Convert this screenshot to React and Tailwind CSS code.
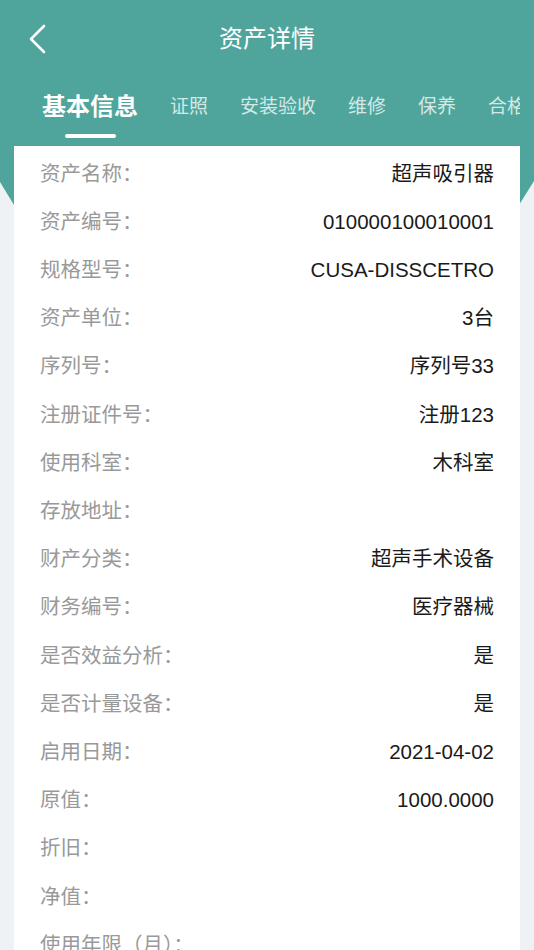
import React from 'react';

const tabs = ['基本信息', '证照', '安装验收', '维修', '保养', '合格证'];

const rows = [
    ['资产名称：', '超声吸引器'],
    ['资产编号：', '010000100010001'],
    ['规格型号：', 'CUSA-DISSCETRO'],
    ['资产单位：', '3台'],
    ['序列号：', '序列号33'],
    ['注册证件号：', '注册123'],
    ['使用科室：', '木科室'],
    ['存放地址：', ''],
    ['财产分类：', '超声手术设备'],
    ['财务编号：', '医疗器械'],
    ['是否效益分析：', '是'],
    ['是否计量设备：', '是'],
    ['启用日期：', '2021-04-02'],
    ['原值：', '1000.0000'],
    ['折旧：', ''],
    ['净值：', ''],
    ['使用年限（月）：', ''],
    ['使用状态：', ''],
];

const App = () => {
    return (
        <div
            className="h-[950px] overflow-hidden bg-[#eef2f5]"
            style={{ fontFamily: '"Liberation Sans", "Noto Sans CJK SC", sans-serif' }}
        >
            {/* Header */}
            <div className="h-[205px] bg-[#4fa59c] [clip-path:polygon(0_0,100%_0,100%_181px,calc(100%-15px)_205px,14px_205px,0_182px)]">
                <div className="relative flex h-[78px] items-center justify-center">
                    <button className="absolute left-[26px] top-[23px] text-white">
                        <svg width="24" height="32" viewBox="0 0 24 32" fill="none" stroke="currentColor">
                            <polyline points="18,3 5,16 18,29" strokeWidth="2.6" strokeLinecap="round" strokeLinejoin="round" />
                        </svg>
                    </button>
                    <h1 className="text-[24px] text-white">资产详情</h1>
                </div>

                {/* Tabs */}
                <div className="mr-[14px] overflow-hidden">
                    <div className="flex items-start gap-[32px] whitespace-nowrap pl-[42px] pt-[15px]">
                        {tabs.map((tab, i) => (
                            <div key={tab} className="flex shrink-0 flex-col items-center">
                                <span
                                    className={
                                        i === 0
                                            ? 'text-[24px] font-bold leading-[28px] text-white'
                                            : 'text-[19px] leading-[28px] text-[#d3e9e6]'
                                    }
                                >
                                    {tab}
                                </span>
                                {i === 0 && <div className="mt-[13px] h-[4px] w-[51px] rounded-full bg-white" />}
                            </div>
                        ))}
                    </div>
                </div>
            </div>

            {/* Detail card */}
            <div className="relative mx-[14px] -mt-[59px] bg-white px-[26px] pt-[4px]">
                {rows.map(([label, value]) => (
                    <div key={label} className="flex h-[48.2px] items-center justify-between text-[20.5px]">
                        <span className="text-[#999999]">{label}</span>
                        <span className="text-[#1a1a1a]">{value}</span>
                    </div>
                ))}
            </div>
        </div>
    );
};

export default App;
